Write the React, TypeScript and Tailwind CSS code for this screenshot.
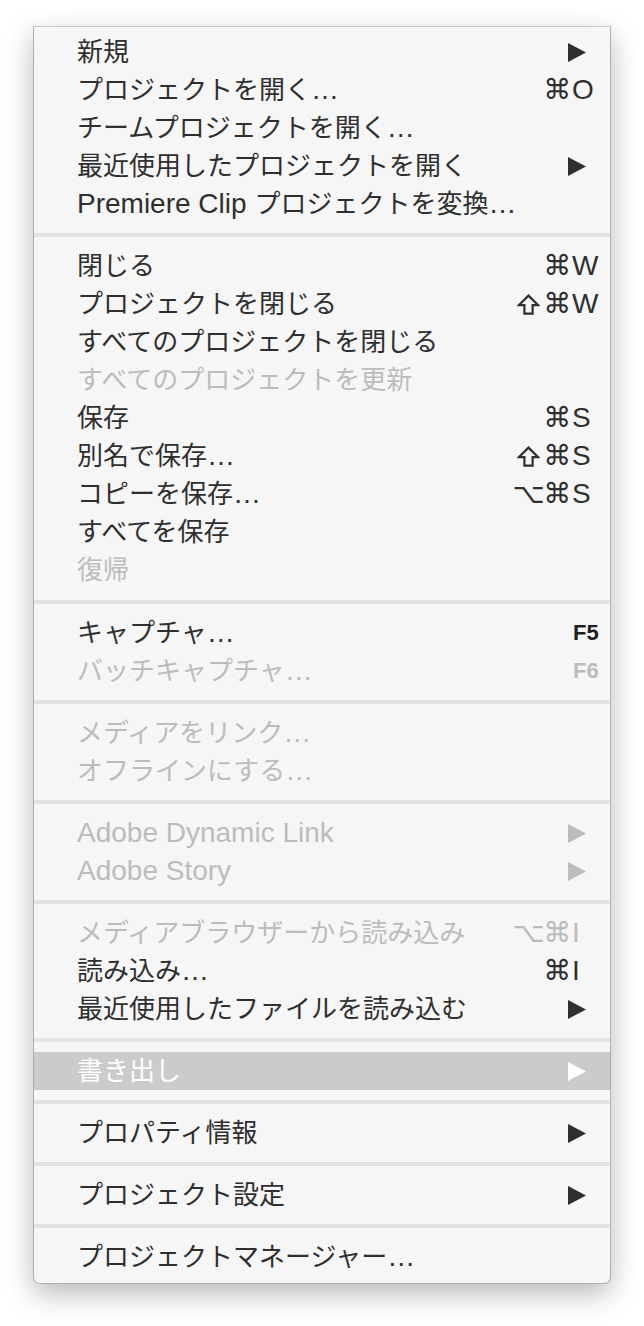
import React from "react";

type Item = {
  label: string;
  mods?: string;
  k?: string;
  fkey?: boolean;
  sub?: boolean;
  disabled?: boolean;
  active?: boolean;
};

type Section = { pad: string; items: Item[] };

const sections: Section[] = [
  {
    pad: "pt-[6px] pb-[10px]",
    items: [
      { label: "新規", sub: true },
      { label: "プロジェクトを開く…", mods: "⌘", k: "O" },
      { label: "チームプロジェクトを開く…" },
      { label: "最近使用したプロジェクトを開く", sub: true },
      { label: "Premiere Clip プロジェクトを変換…" },
    ],
  },
  {
    pad: "pt-[10px] pb-[11px]",
    items: [
      { label: "閉じる", mods: "⌘", k: "W" },
      { label: "プロジェクトを閉じる", mods: "⇧⌘", k: "W" },
      { label: "すべてのプロジェクトを閉じる" },
      { label: "すべてのプロジェクトを更新", disabled: true },
      { label: "保存", mods: "⌘", k: "S" },
      { label: "別名で保存…", mods: "⇧⌘", k: "S" },
      { label: "コピーを保存…", mods: "⌥⌘", k: "S" },
      { label: "すべてを保存" },
      { label: "復帰", disabled: true },
    ],
  },
  {
    pad: "py-[10px]",
    items: [
      { label: "キャプチャ…", k: "F5", fkey: true },
      { label: "バッチキャプチャ…", k: "F6", fkey: true, disabled: true },
    ],
  },
  {
    pad: "py-[10px]",
    items: [
      { label: "メディアをリンク…", disabled: true },
      { label: "オフラインにする…", disabled: true },
    ],
  },
  {
    pad: "py-[10px]",
    items: [
      { label: "Adobe Dynamic Link", sub: true, disabled: true },
      { label: "Adobe Story", sub: true, disabled: true },
    ],
  },
  {
    pad: "py-[10px]",
    items: [
      { label: "メディアブラウザーから読み込み", mods: "⌥⌘", k: "I", disabled: true },
      { label: "読み込み…", mods: "⌘", k: "I" },
      { label: "最近使用したファイルを読み込む", sub: true },
    ],
  },
  {
    pad: "py-[10px]",
    items: [{ label: "書き出し", sub: true, active: true }],
  },
  {
    pad: "py-[10px]",
    items: [{ label: "プロパティ情報", sub: true }],
  },
  {
    pad: "py-[10px]",
    items: [{ label: "プロジェクト設定", sub: true }],
  },
  {
    pad: "pt-[10px] pb-[7px]",
    items: [{ label: "プロジェクトマネージャー…" }],
  },
];

const LATIN = /([A-Za-z0-9 .…]+)/;

function Label({ text }: { text: string }) {
  const parts = text.split(LATIN).filter((p) => p.length > 0);
  return (
    <>
      {parts.map((p, i) =>
        /^[A-Za-z0-9 .…]+$/.test(p) ? (
          <span key={i} className="text-[28px]">
            {p}
          </span>
        ) : (
          <span key={i}>{p}</span>
        )
      )}
    </>
  );
}

function Arrow() {
  return (
    <svg width="18" height="19" viewBox="0 0 18 19" className="ml-[58px] block">
      <polygon points="0,0 18,9.5 0,19" fill="currentColor" />
    </svg>
  );
}

function ShiftIcon() {
  return (
    <svg width="23" height="21" viewBox="0 0 23 21" className="block">
      <path
        d="M11.5 1.6 L21.2 11.2 L15.6 11.2 L15.6 19.6 L7.4 19.6 L7.4 11.2 L1.8 11.2 Z"
        fill="none"
        stroke="currentColor"
        strokeWidth="2.2"
        strokeLinejoin="miter"
      />
    </svg>
  );
}

function Mod({ m }: { m: string }) {
  if (m === "⇧") {
    return (
      <span className="inline-flex h-[38px] w-[29px] items-center justify-center">
        <ShiftIcon />
      </span>
    );
  }
  return (
    <span className="inline-flex w-[29px] justify-center font-['DejaVu_Sans'] text-[28px] leading-[38px]">
      {m}
    </span>
  );
}

function Row({ item }: { item: Item }) {
  const color = item.active
    ? "text-white bg-[#cbcbcb]"
    : item.disabled
    ? "text-[#bcbcbc]"
    : "text-[#2f2f2f]";
  return (
    <div className={`flex h-[38px] items-center pl-[43px] ${color}`}>
      <div className="flex-1 whitespace-nowrap text-[26px] leading-[38px]">
        <Label text={item.label} />
      </div>
      <div className="flex h-[38px] w-[100px] shrink-0 items-center">
        {item.sub ? (
          <Arrow />
        ) : item.k ? (
          <>
            <div className="flex w-[62px] justify-end">
              {(item.mods ?? "").split("").map((m, i) => (
                <Mod key={i} m={m} />
              ))}
            </div>
            {item.fkey ? (
              <span
                className={`pl-[1px] text-[22px] font-semibold leading-[38px] ${
                  item.disabled ? "" : "text-[#1f1f1f]"
                }`}
              >
                {item.k}
              </span>
            ) : (
              <span className="text-[28px] leading-[38px]">{item.k}</span>
            )}
          </>
        ) : null}
      </div>
    </div>
  );
}

export default function App() {
  return (
    <div className="min-h-[1326px] w-[644px] bg-white pt-[26px] font-['Liberation_Sans','Noto_Sans_CJK_JP',sans-serif]">
      <div className="ml-[33px] w-[578px] rounded-b-[7px] border border-[#b0b0b0] border-t-[#c9c9c9] bg-[#f6f6f6] shadow-[0_10px_28px_rgba(0,0,0,0.28)]">
        {sections.map((s, si) => (
          <React.Fragment key={si}>
            {si > 0 && <div className="h-[4px] bg-[#e3e3e3]" />}
            <div className={s.pad}>
              {s.items.map((it, ii) => (
                <Row key={ii} item={it} />
              ))}
            </div>
          </React.Fragment>
        ))}
      </div>
    </div>
  );
}
